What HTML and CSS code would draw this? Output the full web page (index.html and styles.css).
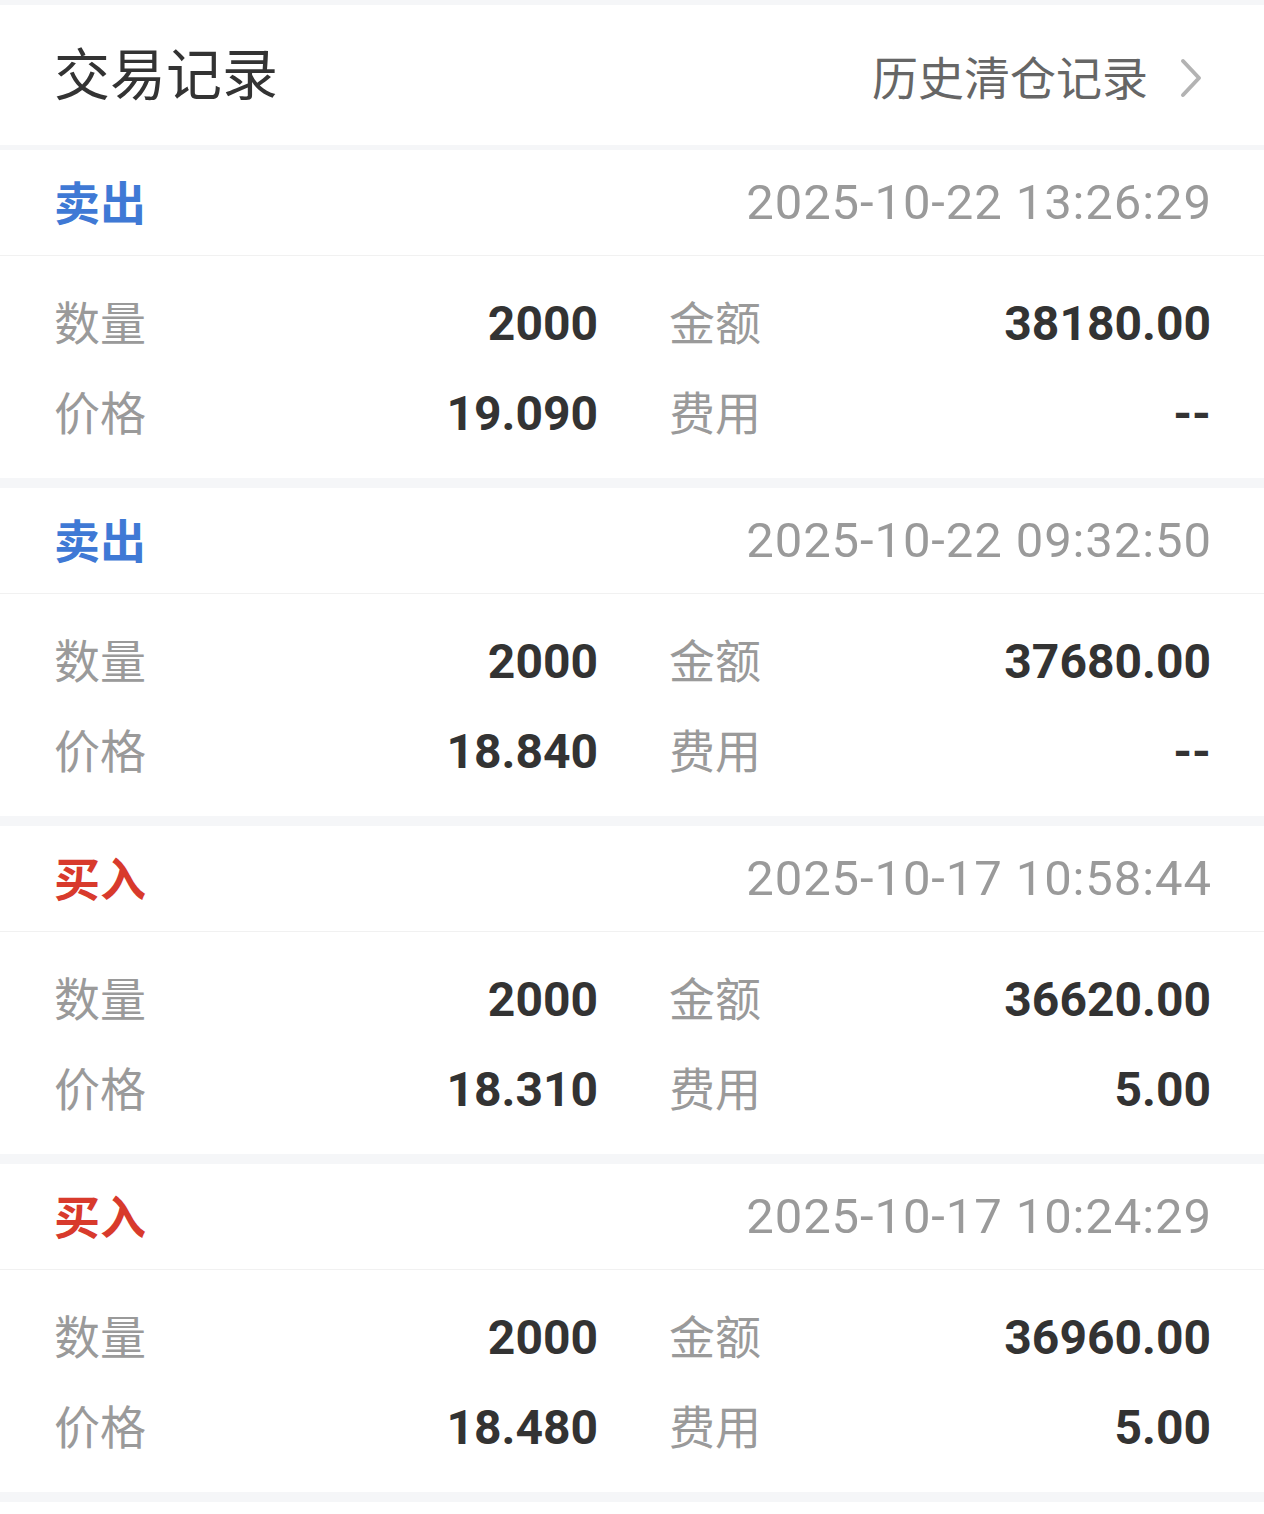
FILE: index.html
```html
<!DOCTYPE html>
<html lang="zh-CN">
<head>
<meta charset="utf-8">
<title>交易记录</title>
<link rel="stylesheet" href="styles.css">
</head>
<body>
<div class="page">
  <header class="topbar">
    <h1 class="title">交易记录</h1>
    <a class="history">
      <span>历史清仓记录</span>
      <svg class="chev" width="24" height="40" viewBox="0 0 24 40"><path d="M3 3 L19 20 L3 37" fill="none" stroke="#b3b3b3" stroke-width="4" stroke-linecap="round" stroke-linejoin="round"/></svg>
    </a>
  </header>

  <section class="card">
    <div class="card-head"><span class="type sell">卖出</span><span class="time">2025-10-22 13:26:29</span></div>
    <div class="card-body">
      <div class="row"><div class="cell"><span class="label">数量</span><span class="value">2000</span></div><div class="cell"><span class="label">金额</span><span class="value">38180.00</span></div></div>
      <div class="row"><div class="cell"><span class="label">价格</span><span class="value">19.090</span></div><div class="cell"><span class="label">费用</span><span class="value">--</span></div></div>
    </div>
  </section>

  <section class="card">
    <div class="card-head"><span class="type sell">卖出</span><span class="time">2025-10-22 09:32:50</span></div>
    <div class="card-body">
      <div class="row"><div class="cell"><span class="label">数量</span><span class="value">2000</span></div><div class="cell"><span class="label">金额</span><span class="value">37680.00</span></div></div>
      <div class="row"><div class="cell"><span class="label">价格</span><span class="value">18.840</span></div><div class="cell"><span class="label">费用</span><span class="value">--</span></div></div>
    </div>
  </section>

  <section class="card">
    <div class="card-head"><span class="type buy">买入</span><span class="time">2025-10-17 10:58:44</span></div>
    <div class="card-body">
      <div class="row"><div class="cell"><span class="label">数量</span><span class="value">2000</span></div><div class="cell"><span class="label">金额</span><span class="value">36620.00</span></div></div>
      <div class="row"><div class="cell"><span class="label">价格</span><span class="value">18.310</span></div><div class="cell"><span class="label">费用</span><span class="value">5.00</span></div></div>
    </div>
  </section>

  <section class="card">
    <div class="card-head"><span class="type buy">买入</span><span class="time">2025-10-17 10:24:29</span></div>
    <div class="card-body">
      <div class="row"><div class="cell"><span class="label">数量</span><span class="value">2000</span></div><div class="cell"><span class="label">金额</span><span class="value">36960.00</span></div></div>
      <div class="row"><div class="cell"><span class="label">价格</span><span class="value">18.480</span></div><div class="cell"><span class="label">费用</span><span class="value">5.00</span></div></div>
    </div>
  </section>
</div>
</body>
</html>
```

FILE: styles.css
```css
* { box-sizing: border-box; }
html, body { margin: 0; padding: 0; }
body {
  background: #ffffff;
  font-family: "Noto Sans CJK SC", "Noto Sans", sans-serif;
}
.page {
  background: #f5f6f8;
  padding-top: 5px;
  display: flex;
  flex-direction: column;
  gap: 10px;
  padding-bottom: 10px;
}
.topbar {
  background: #fff;
  height: 140px;
  display: flex;
  align-items: center;
  justify-content: space-between;
  padding: 0 62px 0 54px;
  margin-bottom: -5px;
}
.title {
  margin: 0;
  font-size: 56px;
  font-weight: 400;
  color: #333;
  line-height: 1;
  transform: translateY(-4px);
}
.history {
  display: flex;
  align-items: center;
  gap: 32px;
  font-size: 46px;
  color: #666;
  line-height: 1;
  transform: translateX(2px);
}
.chev { display: block; transform: translateY(3px); }
.card {
  background: #fff;
}
.card-head {
  height: 106px;
  display: flex;
  align-items: center;
  justify-content: space-between;
  padding: 0 53px 0 54px;
  border-bottom: 1px solid #f1f1f1;
}
.type {
  font-size: 46px;
  font-weight: 700;
  line-height: 1;
  transform: translateY(-3px);
}
.sell { color: #3f79d5; }
.buy { color: #d83a2c; }
.time {
  font-family: Roboto, "Liberation Sans", sans-serif;
  font-size: 49px;
  color: #9a9a9a;
  line-height: 1;
  letter-spacing: 0.9px;
  margin-right: -0.9px;
}
.card-body {
  padding: 21px 0 21px 54px;
}
.row {
  height: 90px;
  display: grid;
  grid-template-columns: 544px 542px;
  column-gap: 71px;
  align-items: center;
}
.cell {
  display: flex;
  align-items: center;
  justify-content: space-between;
}
.label {
  font-size: 46px;
  color: #9a9a9a;
  line-height: 1;
  transform: translateY(-2px);
}
.value {
  font-family: Roboto, "Liberation Sans", sans-serif;
  font-size: 48px;
  font-weight: 700;
  color: #333;
  line-height: 1;
  transform: translateY(2px);
}
```
